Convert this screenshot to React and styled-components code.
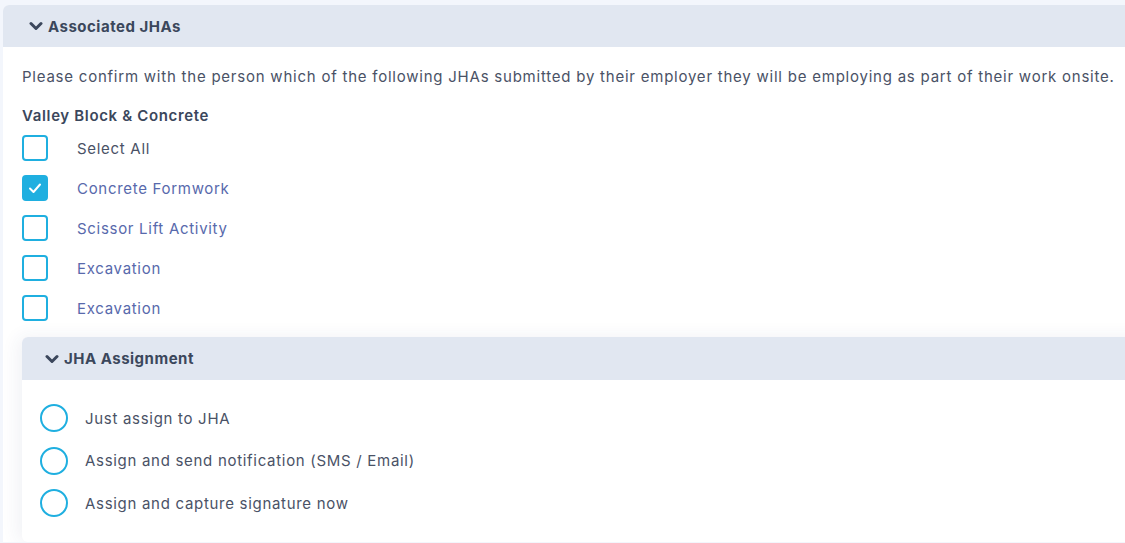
import React from 'react';
import styled, { createGlobalStyle } from 'styled-components';

const GlobalStyle = createGlobalStyle`
  body {
    margin: 0;
    background: #f3f6fc;
    overflow: hidden;
    font-family: Inter, "Noto Sans", sans-serif;
  }
`;

const jhas = [
  { label: 'Concrete Formwork', checked: true },
  { label: 'Scissor Lift Activity', checked: false },
  { label: 'Excavation', checked: false },
  { label: 'Excavation', checked: false },
];

const options = [
  'Just assign to JHA',
  'Assign and send notification (SMS / Email)',
  'Assign and capture signature now',
];

const Chevron = () => (
  <svg width="14" height="10" viewBox="0 0 14 10">
    <polyline points="2,2.5 7,7.5 12,2.5" fill="none" stroke="#3b475c" strokeWidth="3" strokeLinecap="round" strokeLinejoin="round" />
  </svg>
);

const Check = () => (
  <svg width="16" height="16" viewBox="0 0 16 16">
    <polyline points="3,8.5 6.5,12 13,4.5" fill="none" stroke="#fff" strokeWidth="2" strokeLinecap="round" strokeLinejoin="round" />
  </svg>
);

const App = () => {
  return (
    <>
      <GlobalStyle />
      <Page>
        <Card>
          <Header>
            <Chevron />
            <Title>Associated JHAs</Title>
          </Header>
          <Body>
            <Intro>
              Please confirm with the person which of the following JHAs submitted by their employer they will be employing as part of their work onsite.
            </Intro>
            <Company>Valley Block &amp; Concrete</Company>
            <List>
              <CheckRow>
                <Box />
                <Label>Select All</Label>
              </CheckRow>
              {jhas.map((j, i) => (
                <CheckRow key={i}>
                  <Box $checked={j.checked}>{j.checked && <Check />}</Box>
                  <Label $link>{j.label}</Label>
                </CheckRow>
              ))}
            </List>
            <SubCard>
              <SubHeader>
                <Chevron />
                <Title>JHA Assignment</Title>
              </SubHeader>
              <RadioList>
                {options.map((o) => (
                  <RadioRow key={o}>
                    <Radio />
                    <Label>{o}</Label>
                  </RadioRow>
                ))}
              </RadioList>
            </SubCard>
          </Body>
        </Card>
      </Page>
    </>
  );
};

export default App;

const Page = styled.div`
  padding: 5px 0 0 3px;
`;

const Card = styled.div`
  width: 1170px;
  background: #fff;
  border-radius: 6px 6px 0 0;
`;

const Header = styled.div`
  height: 42px;
  background: #e1e7f1;
  border-radius: 6px 6px 0 0;
  display: flex;
  align-items: center;
  gap: 5px;
  padding-left: 26px;
`;

const SubHeader = styled(Header)`
  height: 43px;
  padding-left: 23px;
`;

const Title = styled.span`
  font-size: 15px;
  font-weight: 700;
  letter-spacing: 0.5px;
  color: #3b475c;
`;

const Body = styled.div`
  padding: 20px 0 0 19px;
`;

const Intro = styled.p`
  margin: 0;
  font-size: 15px;
  line-height: 20px;
  letter-spacing: 0.77px;
  white-space: nowrap;
  color: #4a5266;
`;

const Company = styled.div`
  margin-top: 19px;
  font-size: 15px;
  line-height: 20px;
  font-weight: 600;
  letter-spacing: 0.65px;
  color: #3b475c;
`;

const List = styled.div`
  margin-top: 2px;
  display: flex;
  flex-direction: column;
`;

const CheckRow = styled.div`
  height: 40px;
  display: flex;
  align-items: center;
  gap: 29px;
`;

const Box = styled.div`
  width: 26px;
  height: 26px;
  box-sizing: border-box;
  border: 2px solid #1fafe0;
  border-radius: 4px;
  background: ${(p) => (p.$checked ? '#1fafe0' : '#fff')};
  display: flex;
  align-items: center;
  justify-content: center;
`;

const Label = styled.span`
  font-size: 15px;
  letter-spacing: 0.7px;
  color: ${(p) => (p.$link ? '#5869ac' : '#4a5266')};
`;

const SubCard = styled.div`
  margin-top: 9px;
  background: #fff;
  border-radius: 6px;
  box-shadow: -4px 0 18px rgba(40, 60, 110, 0.07);
  padding-bottom: 17px;
`;

const RadioList = styled.div`
  padding: 17px 0 0 18px;
  display: flex;
  flex-direction: column;
`;

const RadioRow = styled.div`
  height: 42.5px;
  display: flex;
  align-items: center;
  gap: 17px;
`;

const Radio = styled.div`
  width: 28px;
  height: 28px;
  box-sizing: border-box;
  border: 2px solid #1fafe0;
  border-radius: 50%;
`;
